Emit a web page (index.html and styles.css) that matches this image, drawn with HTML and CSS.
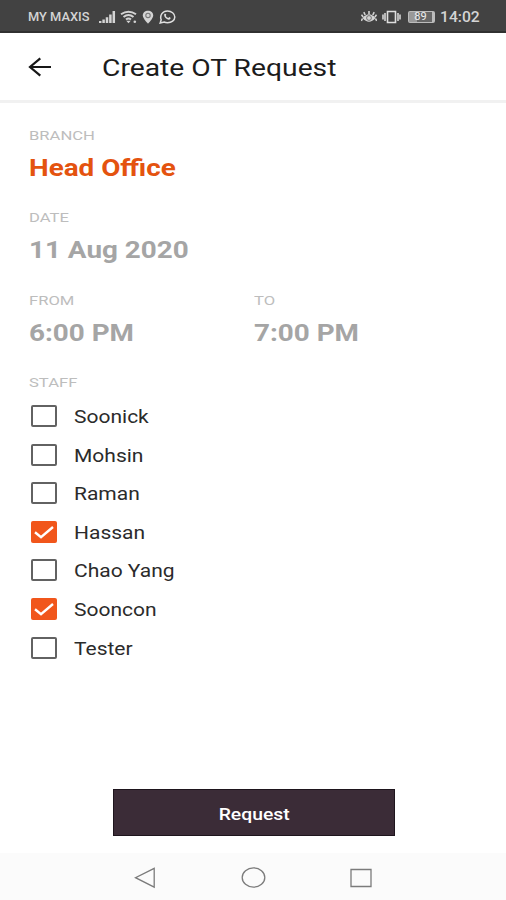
FILE: index.html
```html
<!DOCTYPE html>
<html lang="en">
<head>
<meta charset="utf-8">
<title>Create OT Request</title>
<link rel="stylesheet" href="styles.css">
</head>
<body>
<div class="status">
  <div class="status-left">
    <span class="carrier wide">MY MAXIS</span>
    <svg class="signal" width="17" height="14" viewBox="0 0 17 14"><path d="M1.2 13v-2M4.6 13V9.500M8 13V7.200M11.400 13V4.500M14.800 13V1" fill="none" stroke="#d4d4d4" stroke-width="2.500"/></svg>
    <svg class="wifi" width="18" height="14" viewBox="0 0 18 14"><g fill="none" stroke="#d4d4d4" stroke-width="2"><path d="M1 4.300Q8.500-1 16 4.300M3.500 7Q8.500 3 13.500 7M6 9.600Q8.500 7.500 11 9.600"/></g><path d="M8.500 13.300 6.300 10.700h4.400z" fill="#d4d4d4"/><circle cx="14.800" cy="11.800" r="1.300" fill="#d4d4d4"/></svg>
    <svg class="pin" width="12" height="14" viewBox="0 0 12 14"><path d="M6 .7c3 0 5.200 2 5.200 4.700C11.200 8.600 6 13.500 6 13.500S.8 8.600.8 5.400C.8 2.700 3 .7 6 .7z" fill="#d4d4d4"/><circle cx="6" cy="5.400" r="2.200" fill="none" stroke="#777" stroke-width="1.100"/></svg>
    <svg class="chat" width="17" height="14" viewBox="0 0 17 14"><path d="M1.200 13l1-3.200C.4 5 3.800 1 8.500 1c4 0 7.300 2.600 7.300 6s-3.300 5.700-7.300 5.700c-1.200 0-2.400-.2-3.400-.7z" fill="none" stroke="#dedede" stroke-width="1.500"/><path d="M5.300 4.100c.8-.8 1.600-.5 2 .7l-.5 1.100q.9 1.400 2.500 2l1-.8c1.300.5 1.700 1 1 1.900C9.400 11.300 4.300 7.500 5.300 4.100z" fill="#dedede"/></svg>
  </div>
  <div class="status-right">
    <svg class="eye" width="16" height="14" viewBox="0 0 16 14"><path d="M1.500 8Q8 .5 14.500 8 8 15.500 1.500 8z" fill="#d4d4d4"/><circle cx="8" cy="8" r="2.400" fill="none" stroke="#666" stroke-width=".9"/><path d="M8 4V1M4.200 5 2.800 2.200M11.800 5l1.400-2.800M2 7 .5 4.600M14 7l1.500-2.400M1.500 8.500.3 11M14.500 8.500l1.200 2.500" stroke="#d4d4d4" stroke-width="1.600"/></svg>
    <svg class="vibrate" width="19" height="14" viewBox="0 0 19 14"><path d="M5.500 1.500h8v11h-8z" fill="none" stroke="#dedede" stroke-width="1.600"/><path d="M3 3v8M1 4.500v5M16 3v8M18 4.500v5" stroke="#dedede" stroke-width="1.500"/></svg>
    <div class="battery"><span>89</span></div>
    <span class="clock wide">14:02</span>
  </div>
</div>
<header class="bar">
  <svg class="back" width="24" height="20" viewBox="0 0 24 20"><path d="M23 10H2M12.300 1.300 2 10l10.300 8.700" fill="none" stroke="#181818" stroke-width="2.200"/></svg>
  <h1 class="wide">Create OT Request</h1>
</header>
<main>
  <section class="field"><div><span class="label wide">BRANCH</span></div><div><span class="value accent wide">Head Office</span></div></section>
  <section class="field"><div><span class="label wide">DATE</span></div><div><span class="value wide">11 Aug 2020</span></div></section>
  <div class="times">
    <section class="field"><div><span class="label wide">FROM</span></div><div><span class="value wide">6:00 PM</span></div></section>
    <section class="field"><div><span class="label wide">TO</span></div><div><span class="value wide">7:00 PM</span></div></section>
  </div>
  <section class="staff">
    <div class="label-row"><span class="label wide">STAFF</span></div>
    <ul>
      <li><i class="box"></i><span class="name wide">Soonick</span></li>
      <li><i class="box"></i><span class="name wide">Mohsin</span></li>
      <li><i class="box"></i><span class="name wide">Raman</span></li>
      <li><i class="box checked"><svg width="26" height="22" viewBox="0 0 26 22"><path d="M4 11.300 10 16.200 22 6" fill="none" stroke="#fff" stroke-width="2.400"/></svg></i><span class="name wide">Hassan</span></li>
      <li><i class="box"></i><span class="name wide">Chao Yang</span></li>
      <li><i class="box checked"><svg width="26" height="22" viewBox="0 0 26 22"><path d="M4 11.300 10 16.200 22 6" fill="none" stroke="#fff" stroke-width="2.400"/></svg></i><span class="name wide">Sooncon</span></li>
      <li><i class="box"></i><span class="name wide">Tester</span></li>
    </ul>
  </section>
  <button class="request"><span class="wide">Request</span></button>
</main>
<nav>
  <svg width="22" height="22" viewBox="0 0 22 22"><path d="M20.200 1.300v18.900L1.500 10.700z"/></svg>
  <svg width="26" height="22" viewBox="0 0 26 22"><ellipse cx="13.500" cy="10.500" rx="11.300" ry="9.700"/></svg>
  <svg width="22" height="20" viewBox="0 0 22 20"><path d="M1 1.500h20v17H1z"/></svg>
</nav>
</body>
</html>
```
FILE: styles.css
```css
* { box-sizing: border-box; }
body {
  margin: 0;
  width: 506px;
  height: 900px;
  display: flex;
  flex-direction: column;
  background: #fff;
  font-family: Roboto, "Liberation Sans", sans-serif;
  overflow: hidden;
}
svg { display: block; flex: none; }
.wide {
  display: inline-block;
  white-space: nowrap;
  transform: scaleX(1.2);
  transform-origin: 0 50%;
}
.status {
  height: 33px;
  flex: none;
  display: flex;
  justify-content: space-between;
  padding: 2px 0 0 28px;
  background: #424242;
  border-bottom: 2px solid #303030;
  color: #d4d4d4;
}
.status-left, .status-right { display: flex; align-items: center; }
.carrier { width: 71px; font-size: 12px; font-weight: 500; transform: scaleX(1.07); }
.wifi { margin-left: 4px; }
.pin { margin-left: 4px; }
.chat { margin-left: 5px; }
.status-right { width: 145px; }
.vibrate { margin-left: 5px; }
.battery {
  width: 27px;
  height: 12px;
  margin: 0 5px 0 7px;
  border: 1px solid #bbb;
  border-right: 3px solid #bbb;
  border-radius: 2px;
  background: linear-gradient(90deg, #999 35%, #666 35%);
  color: #eee;
  font-size: 11px;
  line-height: 10px;
  text-align: center;
}
.clock { font-size: 14px; font-weight: 500; transform: scaleX(1.12); }
.bar {
  height: 70px;
  flex: none;
  display: flex;
  align-items: center;
  padding-left: 28px;
  border-bottom: 3px solid #f1f1f1;
}
h1 {
  margin: 4px 0 0 50px;
  font-size: 23px;
  font-weight: 400;
  line-height: 28px;
  color: #1c1c1c;
}
h1.wide { transform: scaleX(1.228); }
main {
  flex: 1;
  display: flex;
  flex-direction: column;
  padding: 23px 29px 0;
}
.field { height: 82.300px; }
.field > div, .label-row { display: flex; }
.label { font-size: 13.500px; line-height: 18px; color: #bdbdbd; }
.label.wide { transform: scaleX(1.23); }
.value { margin-top: 11px; font-size: 23px; font-weight: 700; line-height: 28px; color: #a5a5a5; }
.value.wide { transform: scaleX(1.21); }
.accent { color: #e4530f; }
.times { display: grid; grid-template-columns: 225px 1fr; }
ul { margin: 6px 0 0 2px; padding: 0; list-style: none; }
li { height: 38.570px; display: flex; align-items: center; }
.box { width: 26px; height: 22px; border: 2px solid #626262; border-radius: 2px; }
.checked { border: 0; background: #f1561b; }
.name { margin: 2px 0 0 17px; font-size: 17.500px; color: #2b2b2b; }
.request {
  width: 282px;
  height: 47px;
  margin: auto 0 17px 84px;
  display: flex;
  align-items: center;
  justify-content: center;
  padding: 2px 0 0;
  border: 1.500px solid #1e151d;
  background: #3b2c37;
  color: #fff;
  font: 500 17px Roboto, sans-serif;
}
.request .wide { transform: scaleX(1.14); transform-origin: 50% 50%; }
nav {
  height: 47px;
  flex: none;
  display: flex;
  justify-content: space-between;
  align-items: center;
  padding: 2px 134px 0;
  background: #fbfbfb;
}
nav svg { fill: none; stroke: #7b7b7b; stroke-width: 1.300; }
```
